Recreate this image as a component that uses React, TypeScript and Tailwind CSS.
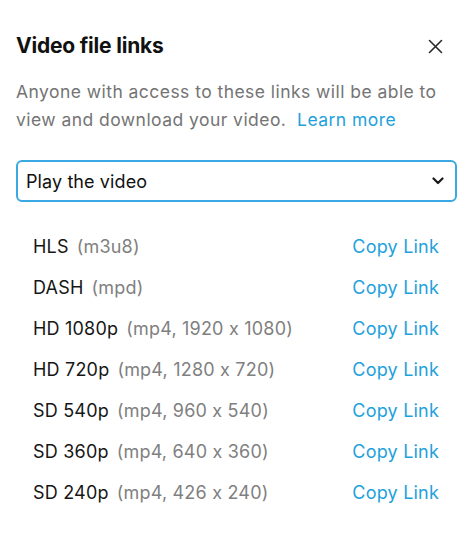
import React from "react";

const rows: { label: string; meta: string }[] = [
  { label: "HLS", meta: "(m3u8)" },
  { label: "DASH", meta: "(mpd)" },
  { label: "HD 1080p", meta: "(mp4, 1920 x 1080)" },
  { label: "HD 720p", meta: "(mp4, 1280 x 720)" },
  { label: "SD 540p", meta: "(mp4, 960 x 540)" },
  { label: "SD 360p", meta: "(mp4, 640 x 360)" },
  { label: "SD 240p", meta: "(mp4, 426 x 240)" },
];

export default function App() {
  return (
    <div
      className="w-[474px] h-[546px] bg-white pt-8 pl-4 pr-[17px]"
      style={{ fontFamily: "Inter, 'Liberation Sans', Arial, sans-serif" }}
    >
      <div className="flex items-center justify-between h-[28px]">
        <h1 className="text-[21px] leading-[28px] font-bold text-[#111111] tracking-[-0.2px]">
          Video file links
        </h1>
        <svg
          width="15"
          height="15"
          viewBox="0 0 15 15"
          className="mr-[14px]"
          fill="none"
          stroke="#2a2a2a"
          strokeWidth="1.6"
          strokeLinecap="round"
        >
          <path d="M1.5 1.5 L13.5 13.5 M13.5 1.5 L1.5 13.5" />
        </svg>
      </div>

      <p className="mt-[18px] text-[17.5px] leading-[28px] text-[#747474] tracking-[0.45px]">
        Anyone with access to these links will be able to view and download your video.{"\u00a0 "}
        <span className="text-[#1ea1dc]">Learn more</span>
      </p>

      <div className="mt-[26px] h-[42px] border-2 border-[#3aa8e2] rounded-[6px] flex items-center justify-between pl-[8px] pr-[11px]">
        <span className="text-[18px] text-[#111111] tracking-[0.1px]">Play the video</span>
        <svg
          width="12"
          height="8"
          viewBox="0 0 12 8"
          fill="none"
          stroke="#1a1a1a"
          strokeWidth="2.2"
          strokeLinecap="round"
          strokeLinejoin="round"
        >
          <path d="M1.5 1.5 L6 6 L10.5 1.5" />
        </svg>
      </div>

      <div className="mt-6 pl-[17px] pr-[18px]">
        {rows.map((r) => (
          <div
            key={r.label}
            className="h-[41px] flex items-center justify-between text-[18px] leading-[41px] tracking-[0.2px]"
          >
            <div className="flex">
              <span className="text-[#161616]">{r.label}</span>
              <span className="ml-2 text-[#808080]">{r.meta}</span>
            </div>
            <span className="text-[#1ea1dc]">Copy Link</span>
          </div>
        ))}
      </div>
    </div>
  );
}
